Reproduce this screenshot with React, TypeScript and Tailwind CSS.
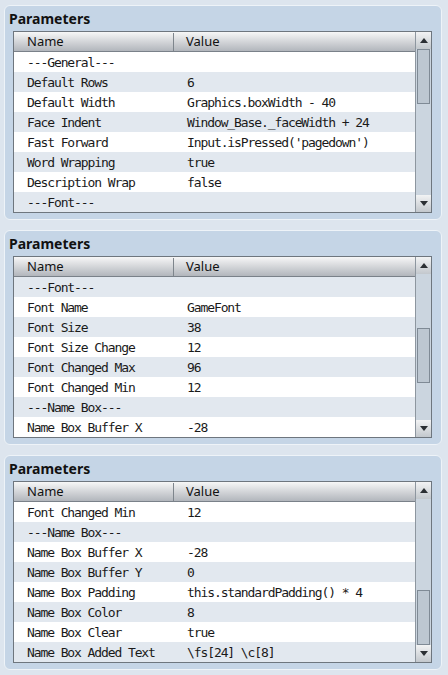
import React from "react";

interface Param {
  name: string;
  value: string;
}

const params: Param[] = [
  { name: "---General---", value: "" },
  { name: "Default Rows", value: "6" },
  { name: "Default Width", value: "Graphics.boxWidth - 40" },
  { name: "Face Indent", value: "Window_Base._faceWidth + 24" },
  { name: "Fast Forward", value: "Input.isPressed('pagedown')" },
  { name: "Word Wrapping", value: "true" },
  { name: "Description Wrap", value: "false" },
  { name: "---Font---", value: "" },
  { name: "Font Name", value: "GameFont" },
  { name: "Font Size", value: "38" },
  { name: "Font Size Change", value: "12" },
  { name: "Font Changed Max", value: "96" },
  { name: "Font Changed Min", value: "12" },
  { name: "---Name Box---", value: "" },
  { name: "Name Box Buffer X", value: "-28" },
  { name: "Name Box Buffer Y", value: "0" },
  { name: "Name Box Padding", value: "this.standardPadding() * 4" },
  { name: "Name Box Color", value: "8" },
  { name: "Name Box Clear", value: "true" },
  { name: "Name Box Added Text", value: "\\fs[24] \\c[8]" },
];

const sans = { fontFamily: '"Noto Sans", "DejaVu Sans", sans-serif' };
const mono = { fontFamily: '"DejaVu Sans Mono", "Liberation Mono", monospace' };

function Arrow({ down }: { down?: boolean }) {
  return (
    <div className="h-[17px] flex items-center justify-center bg-gradient-to-b from-[#f2f3f4] to-[#c3c8cd]">
      <svg width="8" height="5" viewBox="0 0 8 5">
        <path d={down ? "M0 0 L8 0 L4 5 Z" : "M0 5 L8 5 L4 0 Z"} fill="#2b2f33" />
      </svg>
    </div>
  );
}

function Panel({ start, thumb }: { start: number; thumb: number }) {
  const rows = params.slice(start, start + 8);
  return (
    <div className="h-[215px] rounded-[6px] border border-[#eef3f8] bg-[#c5d5e6] flex flex-col pl-[8px] pr-[9px]">
      <div className="h-[25px] pt-[4px] -ml-[4px] text-[14px] leading-[18px] font-bold text-[#111]" style={sans}>
        Parameters
      </div>
      <div className="h-[182px] border border-[#6e767e] flex bg-white">
        <div className="flex-1 flex flex-col">
          <div
            className="h-[20px] flex items-center pt-[1px] bg-gradient-to-b from-[#f7f7f7] to-[#b2b6bc] border-b border-[#7a8189] text-[13px] text-[#111]"
            style={sans}
          >
            <div className="w-[160px] h-full flex items-center pl-[13px] border-r border-[#7e858c]">Name</div>
            <div className="pl-[12px]">Value</div>
          </div>
          {rows.map((p, i) => (
            <div
              key={p.name}
              className={`h-[20px] flex items-center pt-[2px] text-[13px] tracking-[-1.1px] text-[#1a1a1a] ${
                (start + i) % 2 === 0 ? "bg-white" : "bg-[#e2e8ef]"
              }`}
              style={mono}
            >
              <div className="w-[161px] pl-[13px] whitespace-pre">{p.name}</div>
              <div className="pl-[12px] whitespace-pre">{p.value}</div>
            </div>
          ))}
        </div>
        <div className="w-[16px] border-l border-[#8d969f] bg-[#cbd5df] flex flex-col">
          <Arrow />
          <div className="flex-1 relative">
            <div
              className="absolute left-[1px] right-[1px] h-[55px] border border-[#7f8a95] bg-[#bdc7d1]"
              style={{ top: thumb }}
            />
          </div>
          <Arrow down />
        </div>
      </div>
    </div>
  );
}

export default function App() {
  return (
    <div className="w-[448px] h-[675px] bg-[#dde5ee] pt-[5px] pl-[4px] pr-[6px] flex flex-col gap-[10px]">
      <Panel start={0} thumb={0} />
      <Panel start={7} thumb={54} />
      <Panel start={12} thumb={91} />
    </div>
  );
}
